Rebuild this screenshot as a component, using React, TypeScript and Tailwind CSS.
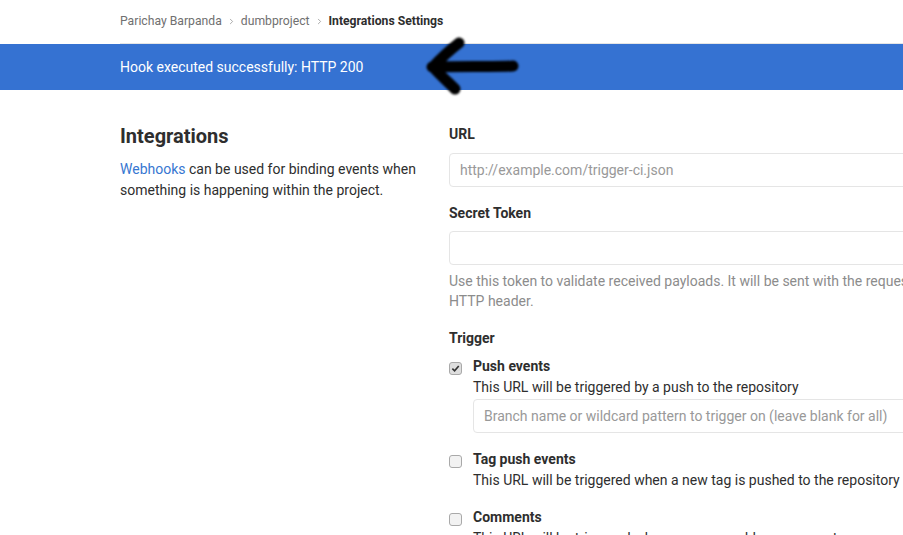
import { ChevronRight } from 'lucide-react';

const font = { fontFamily: 'Roboto, "Liberation Sans", sans-serif' };

const TriggerOption = ({
  title,
  desc,
  checked,
  children,
}: {
  title: string;
  desc: string;
  checked?: boolean;
  children?: React.ReactNode;
}) => (
  <div className="flex items-start gap-[11px]">
    <div
      className={`mt-[7px] w-[13px] h-[13px] rounded-[3px] border border-[#a9a9a9] flex items-center justify-center shrink-0 ${
        checked ? 'bg-[#dedede]' : 'bg-[#f2f2f2]'
      }`}
    >
      {checked && (
        <svg width="9" height="9" viewBox="0 0 10 10">
          <path d="M1.5 5.2 L4 7.6 L8.6 2.2" fill="none" stroke="#333" strokeWidth="1.8" />
        </svg>
      )}
    </div>
    <div className="flex-1">
      <div className="text-[14px] font-bold text-[#2e2e2e] leading-[21px] pt-[1px]">{title}</div>
      <div className="text-[14px] text-[#2e2e2e] leading-[21px]">{desc}</div>
      {children}
    </div>
  </div>
);

export default function App() {
  return (
    <div className="h-[535px] w-[903px] overflow-hidden bg-white relative" style={font}>
      {/* breadcrumb */}
      <div className="pl-[120px]">
        <div className="h-[43px] flex items-center gap-[5px] text-[12.2px] border-b border-[#e5e5e5] box-content">
          <span className="text-[#707070]">Parichay Barpanda</span>
          <ChevronRight size={9} className="text-[#909090]" />
          <span className="text-[#707070]">dumbproject</span>
          <ChevronRight size={9} className="text-[#909090]" />
          <span className="font-bold text-[#2e2e2e]">Integrations Settings</span>
        </div>
      </div>

      {/* flash */}
      <div className="h-[46px] bg-[#3572d2] flex items-center pl-[120px] pt-[1px] text-white text-[14px]">
        Hook executed successfully: HTTP 200
      </div>

      {/* arrow annotation */}
      <svg
        className="absolute left-[418px] top-[34px]"
        width="112"
        height="66"
        viewBox="0 0 112 66"
        style={{ filter: 'blur(1px)' }}
      >
        <path
          d="M14 33 C 42 32, 72 33, 95 32 M15 33 C 24 23, 32 16, 41 9 M15 33 C 22 41, 30 48, 37 55"
          fill="none"
          stroke="#000"
          strokeWidth="11"
          strokeLinecap="round"
          strokeLinejoin="round"
        />
      </svg>

      <div className="flex pl-[120px] pt-[33px]">
        {/* left column */}
        <div className="w-[329px] shrink-0">
          <h4 className="text-[20px] font-bold text-[#2e2e2e] leading-[26px]">Integrations</h4>
          <p className="mt-[10px] text-[14px] leading-[21px] text-[#2e2e2e] pr-[20px]">
            <span className="text-[#3777d1]">Webhooks</span> can be used for binding events when something
            is happening within the project.
          </p>
        </div>

        {/* right column */}
        <div className="w-[620px] shrink-0 text-[14px]">
          <label className="block pt-[1px] font-bold text-[#2e2e2e] leading-[20px]">URL</label>
          <div className="mt-[9px] h-[34px] border border-[#e5e5e5] rounded-[4px] flex items-center px-[10px] pt-[1px] text-[#999]">
            http://example.com/trigger-ci.json
          </div>

          <label className="block mt-[16px] font-bold text-[#2e2e2e] leading-[20px]">Secret Token</label>
          <div className="mt-[8px] h-[34px] border border-[#e5e5e5] rounded-[4px]" />
          <p className="mt-[6px] text-[#8c8c8c] leading-[20px]">
            Use this token to validate received payloads. It will be sent with the request in the X-Gitlab-Token
            HTTP header.
          </p>

          <label className="block mt-[17px] font-bold text-[#2e2e2e] leading-[20px]">Trigger</label>

          <div className="mt-[7px] flex flex-col gap-[15px]">
            <TriggerOption title="Push events" desc="This URL will be triggered by a push to the repository" checked>
              <div className="mt-[1px] h-[34px] border border-[#e5e5e5] rounded-[4px] flex items-center px-[10px] text-[#999]">
                Branch name or wildcard pattern to trigger on (leave blank for all)
              </div>
            </TriggerOption>
            <TriggerOption
              title="Tag push events"
              desc="This URL will be triggered when a new tag is pushed to the repository"
            />
            <TriggerOption
              title="Comments"
              desc="This URL will be triggered when someone adds a comment"
            />
          </div>
        </div>
      </div>
    </div>
  );
}
